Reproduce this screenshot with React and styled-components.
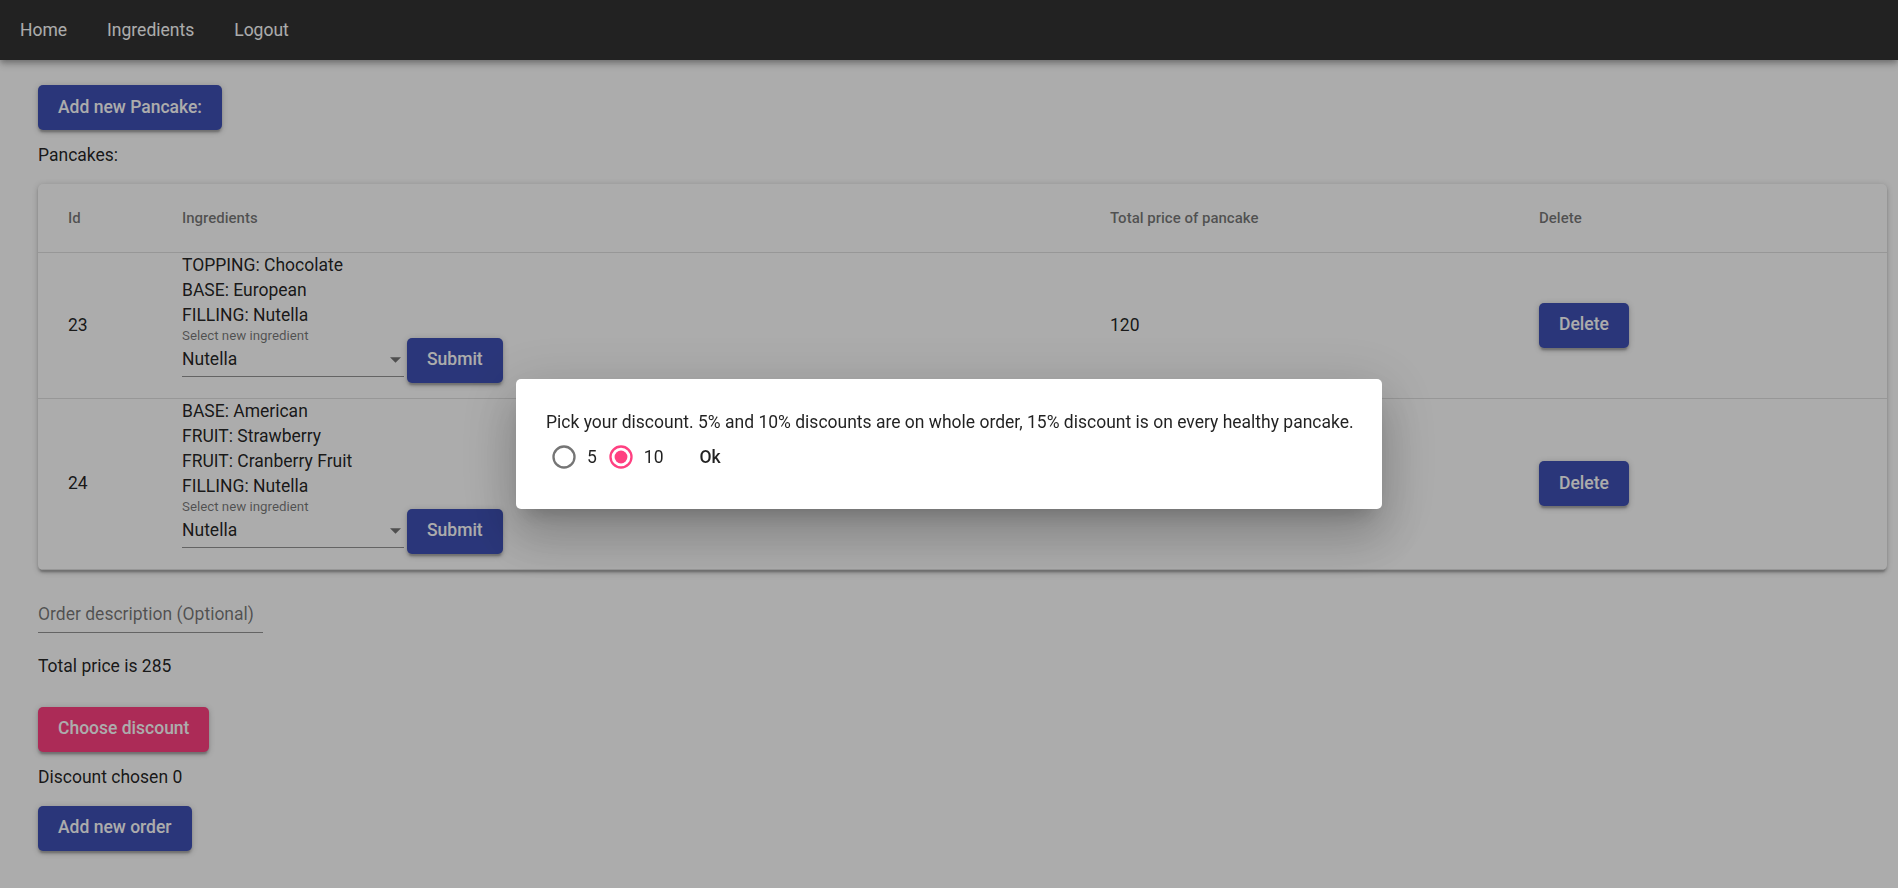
import React from 'react';
import styled, { createGlobalStyle } from 'styled-components';

const FONT = 'Roboto, "Liberation Sans", Arial, sans-serif';

const Global = createGlobalStyle`
  html, body { margin: 0; padding: 0; background: #fff; }
  body { font-family: ${FONT}; color: rgba(0,0,0,0.87); }
  *, *::before, *::after { box-sizing: border-box; }
`;

const Page = styled.div`
  min-height: 888px;
  background: #fff;
`;

const AppBar = styled.header`
  height: 60px;
  background: #333;
  display: flex;
  align-items: center;
  box-shadow: 0 2.5px 5px -1px rgba(0,0,0,0.2), 0 5px 6px 0 rgba(0,0,0,0.14), 0 1px 12px 0 rgba(0,0,0,0.12);
`;

const NavLink = styled.a`
  padding: 0 20px;
  color: #fff;
  font-size: 17.5px;
  line-height: 60px;
  text-decoration: none;
`;

const Main = styled.main`
  padding: 25px 11px 30px 38px;
  display: flex;
  flex-direction: column;
  align-items: flex-start;
`;

const Button = styled.button`
  flex: none;
  height: 45px;
  margin: ${p => p.$mt || 0}px 0 0 ${p => p.$ml || 0}px;
  padding: 0 20px;
  border: 0;
  border-radius: 5px;
  background: ${p => (p.$color === 'secondary' ? '#ff4081' : '#3f51b5')};
  color: #fff;
  font-family: ${FONT};
  font-size: 17.5px;
  font-weight: 500;
  line-height: 1;
  cursor: pointer;
  box-shadow: 0 1.25px 6.25px 0 rgba(0,0,0,0.2), 0 2.5px 2.5px 0 rgba(0,0,0,0.14), 0 3.75px 1.25px -2.5px rgba(0,0,0,0.12);
`;

const Text = styled.p`
  margin: ${p => p.$mt || 0}px 0 0;
  font-size: 17.5px;
  line-height: 25px;
`;

const Paper = styled.div`
  align-self: stretch;
  margin-top: 16.5px;
  background: #fff;
  border-radius: 5px;
  overflow: hidden;
  box-shadow: 0 1.25px 6.25px 0 rgba(0,0,0,0.2), 0 2.5px 2.5px 0 rgba(0,0,0,0.14), 0 3.75px 1.25px -2.5px rgba(0,0,0,0.12);
`;

const Table = styled.table`
  width: 100%;
  border-collapse: collapse;
  table-layout: fixed;
`;

const HeadCell = styled.th`
  height: 68px;
  padding: 0 0 0 30px;
  text-align: left;
  vertical-align: middle;
  font-size: 15px;
  font-weight: 500;
  color: rgba(0,0,0,0.54);
  border-bottom: 1px solid #e0e0e0;
`;

const Cell = styled.td`
  padding: 0 0 ${p => (p.$content ? 15 : 0)}px 30px;
  vertical-align: ${p => (p.$content ? 'top' : 'middle')};
  font-size: 17.5px;
  line-height: 25px;
  border-bottom: 1px solid #e0e0e0;
`;

const IngredientLine = styled.div`
  line-height: 25px;
  white-space: nowrap;
`;

const FormRow = styled.div`
  display: flex;
  align-items: flex-start;
`;

const FormControl = styled.div`
  width: 222px;
  display: flex;
  flex-direction: column;
`;

const SelectLabel = styled.span`
  font-size: 13.3px;
  line-height: 15px;
  color: rgba(0,0,0,0.54);
`;

const SelectBox = styled.div`
  height: 34px;
  display: flex;
  align-items: center;
  justify-content: space-between;
  padding: 1px 3px 0 0;
  border-bottom: 1px solid rgba(0,0,0,0.42);
  font-size: 17.5px;
`;

const TextField = styled.input`
  margin-top: 22px;
  width: 225px;
  height: 41px;
  padding: 10px 0 5px;
  border: 0;
  border-bottom: 1px solid rgba(0,0,0,0.42);
  background: transparent;
  font-family: ${FONT};
  font-size: 17.5px;
  line-height: 25px;
  color: rgba(0,0,0,0.87);
  outline: none;
  &::placeholder { color: rgba(0,0,0,0.54); opacity: 1; }
`;

const Backdrop = styled.div`
  position: fixed;
  inset: 0;
  background: rgba(0,0,0,0.325);
  display: flex;
  align-items: center;
  justify-content: center;
  z-index: 10;
`;

const Dialog = styled.div`
  width: 866px;
  background: #fff;
  border-radius: 5px;
  padding: 31px 24px 30px 30px;
  box-shadow: 0 13.75px 18.75px -8.75px rgba(0,0,0,0.2), 0 30px 47.5px 3.75px rgba(0,0,0,0.14), 0 11.25px 57.5px 10px rgba(0,0,0,0.12);
`;

const DialogText = styled.p`
  margin: 0;
  font-size: 17.5px;
  line-height: 25px;
  white-space: nowrap;
  color: rgba(0,0,0,0.87);
`;

const RadioRow = styled.div`
  height: 44px;
  display: flex;
  align-items: center;
  padding-left: 4px;
`;

const RadioOption = styled.label`
  display: flex;
  align-items: center;
  gap: 9px;
  margin-right: 10px;
  font-size: 17.5px;
  color: rgba(0,0,0,0.87);
`;

const TextButton = styled.button`
  margin-left: 16px;
  height: 36px;
  padding: 0 10px;
  border: 0;
  background: transparent;
  font-family: ${FONT};
  font-size: 17.5px;
  font-weight: 500;
  color: rgba(0,0,0,0.87);
`;

const RadioIcon = ({ checked }) => (
  <svg width="28" height="28" viewBox="0 0 24 24" aria-hidden="true">
    <circle cx="12" cy="12" r="9" fill="none" strokeWidth="2" stroke={checked ? '#ff4081' : 'rgba(0,0,0,0.54)'} />
    {checked && <circle cx="12" cy="12" r="5.5" fill="#ff4081" />}
  </svg>
);

const ArrowDrop = () => (
  <svg width="11" height="6" viewBox="0 0 10 5" aria-hidden="true">
    <path d="M0 0l5 5 5-5z" fill="rgba(0,0,0,0.54)" />
  </svg>
);

const pancakes = [
  { id: 23, ingredients: ['TOPPING: Chocolate', 'BASE: European', 'FILLING: Nutella'], price: 120 },
  { id: 24, ingredients: ['BASE: American', 'FRUIT: Strawberry', 'FRUIT: Cranberry Fruit', 'FILLING: Nutella'], price: 165 },
];

export default function App() {
  return (
    <>
      <Global />
      <Page>
        <AppBar>
          <NavLink>Home</NavLink>
          <NavLink>Ingredients</NavLink>
          <NavLink>Logout</NavLink>
        </AppBar>
        <Main>
          <Button>Add new Pancake:</Button>
          <Text $mt={12.5}>Pancakes:</Text>
          <Paper>
            <Table>
              <colgroup>
                <col style={{ width: 114 }} />
                <col style={{ width: 928 }} />
                <col style={{ width: 429 }} />
                <col />
              </colgroup>
              <thead>
                <tr>
                  <HeadCell>Id</HeadCell>
                  <HeadCell>Ingredients</HeadCell>
                  <HeadCell>Total price of pancake</HeadCell>
                  <HeadCell>Delete</HeadCell>
                </tr>
              </thead>
              <tbody>
                {pancakes.map(p => (
                  <tr key={p.id}>
                    <Cell>{p.id}</Cell>
                    <Cell $content>
                      {p.ingredients.map(i => (
                        <IngredientLine key={i}>{i}</IngredientLine>
                      ))}
                      <FormRow>
                        <FormControl>
                          <SelectLabel>Select new ingredient</SelectLabel>
                          <SelectBox>
                            <span>Nutella</span>
                            <ArrowDrop />
                          </SelectBox>
                        </FormControl>
                        <Button $mt={10} $ml={3}>Submit</Button>
                      </FormRow>
                    </Cell>
                    <Cell>{p.price}</Cell>
                    <Cell>
                      <Button>Delete</Button>
                    </Cell>
                  </tr>
                ))}
              </tbody>
            </Table>
          </Paper>
          <TextField placeholder="Order description (Optional)" />
          <Text $mt={21.5}>Total price is 285</Text>
          <Button $mt={27.5} $color="secondary">Choose discount</Button>
          <Text $mt={13.5}>Discount chosen 0</Text>
          <Button $mt={15.5}>Add new order</Button>
        </Main>
      </Page>
      <Backdrop>
        <Dialog role="dialog">
          <DialogText>
            Pick your discount. 5% and 10% discounts are on whole order, 15% discount is on every healthy pancake.
          </DialogText>
          <RadioRow>
            <RadioOption>
              <RadioIcon />
              5
            </RadioOption>
            <RadioOption>
              <RadioIcon checked />
              10
            </RadioOption>
            <TextButton>Ok</TextButton>
          </RadioRow>
        </Dialog>
      </Backdrop>
    </>
  );
}
